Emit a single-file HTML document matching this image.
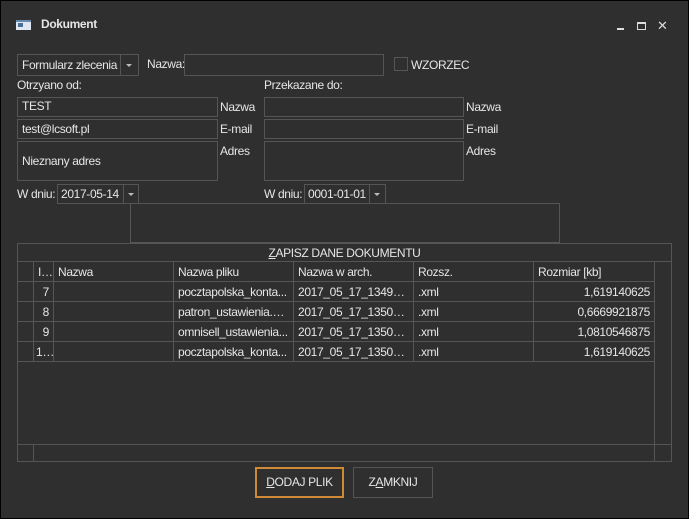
<!DOCTYPE html>
<html><head><meta charset="utf-8"><style>
*{box-sizing:border-box;margin:0;padding:0}
body{width:689px;height:519px;background:#000;font-family:"Liberation Sans",sans-serif;font-size:12px;letter-spacing:-0.35px;color:#e6e6e6;overflow:hidden}
#w{position:absolute;left:1px;top:1px;width:687px;height:517px;background:#2f2f2f}
.a{position:absolute}
.b{position:absolute;border:1px solid #555}
.t{position:absolute;white-space:nowrap;line-height:14px}
.arr{position:absolute;width:0;height:0;border-left:3px solid transparent;border-right:3px solid transparent;border-top:3px solid #bbb}
.c{position:absolute;height:20px;line-height:20px;border-right:1px solid #555;border-bottom:1px solid #555;padding:0 4px;white-space:nowrap;overflow:hidden;text-overflow:ellipsis}
.r{text-align:right}
</style></head><body><div id="w"></div>
<div class="a" style="left:16px;top:20px;width:15px;height:10px;background:#dfe8f0;border-top:2px solid #6a8bb0"></div>
<div class="a" style="left:18px;top:23px;width:5px;height:4px;background:#4a6e96"></div>
<div class="t" style="left:41px;top:17px;font-weight:bold;font-size:12px">Dokument</div>
<div class="a" style="left:617px;top:28px;width:7px;height:2px;background:#ddd"></div>
<div class="a" style="left:637px;top:22px;width:9px;height:8px;border:1px solid #ddd;border-top-width:2px"></div>
<div class="t" style="left:657px;top:19px;font-size:13px;color:#ddd">✕</div>
<div class="b" style="left:17px;top:54px;width:122px;height:22px"></div>
<div class="a" style="left:120px;top:55px;width:1px;height:20px;background:#555"></div>
<div class="arr" style="left:126px;top:64px"></div>
<div class="t" style="left:22px;top:58px">Formularz zlecenia</div>
<div class="t" style="left:147px;top:57px">Nazwa:</div>
<div class="b" style="left:184px;top:54px;width:200px;height:22px"></div>
<div class="b" style="left:394px;top:57px;width:14px;height:14px"></div>
<div class="t" style="left:411px;top:58px">WZORZEC</div>
<div class="t" style="left:17px;top:78px">Otrzyano od:</div>
<div class="t" style="left:264px;top:78px">Przekazane do:</div>
<div class="b" style="left:17px;top:97px;width:201px;height:20px"></div>
<div class="t" style="left:22px;top:99px">TEST</div>
<div class="b" style="left:17px;top:119px;width:201px;height:20px"></div>
<div class="t" style="left:22px;top:122px">test@lcsoft.pl</div>
<div class="b" style="left:17px;top:141px;width:201px;height:40px"></div>
<div class="t" style="left:22px;top:154px">Nieznany adres</div>
<div class="t" style="left:220px;top:100px">Nazwa</div>
<div class="t" style="left:220px;top:122px">E-mail</div>
<div class="t" style="left:220px;top:144px">Adres</div>
<div class="b" style="left:264px;top:97px;width:200px;height:20px"></div>
<div class="b" style="left:264px;top:119px;width:200px;height:20px"></div>
<div class="b" style="left:264px;top:141px;width:200px;height:40px"></div>
<div class="t" style="left:466px;top:100px">Nazwa</div>
<div class="t" style="left:466px;top:122px">E-mail</div>
<div class="t" style="left:466px;top:144px">Adres</div>
<div class="t" style="left:17px;top:187px">W dniu:</div>
<div class="b" style="left:57px;top:184px;width:82px;height:20px"></div>
<div class="a" style="left:123px;top:185px;width:1px;height:18px;background:#555"></div>
<div class="arr" style="left:128px;top:193px"></div>
<div class="t" style="left:61px;top:187px">2017-05-14</div>
<div class="t" style="left:264px;top:187px">W dniu:</div>
<div class="b" style="left:304px;top:184px;width:82px;height:20px"></div>
<div class="a" style="left:369px;top:185px;width:1px;height:18px;background:#555"></div>
<div class="arr" style="left:374px;top:193px"></div>
<div class="t" style="left:308px;top:187px">0001-01-01</div>
<div class="b" style="left:130px;top:203px;width:430px;height:40px"></div>
<div class="b" style="left:17px;top:243px;width:655px;height:219px"></div>
<div class="a" style="left:18px;top:261px;width:653px;height:1px;background:#555"></div>
<div class="t" style="left:17px;top:246px;width:655px;text-align:center"><u>Z</u>APISZ DANE DOKUMENTU</div>
<div class="a" style="left:18px;top:262px">
<div style="position:relative">
<div class="c" style="left:0;top:0;width:16px"></div>
<div class="c" style="left:16px;top:0;width:20px">ID</div>
<div class="c" style="left:36px;top:0;width:120px">Nazwa</div>
<div class="c" style="left:156px;top:0;width:120px">Nazwa pliku</div>
<div class="c" style="left:276px;top:0;width:120px">Nazwa w arch.</div>
<div class="c" style="left:396px;top:0;width:120px">Rozsz.</div>
<div class="c" style="left:516px;top:0;width:121px">Rozmiar [kb]</div>
<div class="c" style="left:0;top:20px;width:16px"></div><div class="c r" style="left:16px;top:20px;width:20px">7</div><div class="c" style="left:36px;top:20px;width:120px"></div><div class="c" style="left:156px;top:20px;width:120px">pocztapolska_konta...</div><div class="c" style="left:276px;top:20px;width:120px">2017_05_17_134958...</div><div class="c" style="left:396px;top:20px;width:120px">.xml</div><div class="c r" style="left:516px;top:20px;width:121px">1,619140625</div>
<div class="c" style="left:0;top:40px;width:16px"></div><div class="c r" style="left:16px;top:40px;width:20px">8</div><div class="c" style="left:36px;top:40px;width:120px"></div><div class="c" style="left:156px;top:40px;width:120px">patron_ustawienia.xml</div><div class="c" style="left:276px;top:40px;width:120px">2017_05_17_135000...</div><div class="c" style="left:396px;top:40px;width:120px">.xml</div><div class="c r" style="left:516px;top:40px;width:121px">0,6669921875</div>
<div class="c" style="left:0;top:60px;width:16px"></div><div class="c r" style="left:16px;top:60px;width:20px">9</div><div class="c" style="left:36px;top:60px;width:120px"></div><div class="c" style="left:156px;top:60px;width:120px">omnisell_ustawienia...</div><div class="c" style="left:276px;top:60px;width:120px">2017_05_17_135002...</div><div class="c" style="left:396px;top:60px;width:120px">.xml</div><div class="c r" style="left:516px;top:60px;width:121px">1,0810546875</div>
<div class="c" style="left:0;top:80px;width:16px"></div><div class="c" style="left:16px;top:80px;width:20px;padding:0 2px">1...</div><div class="c" style="left:36px;top:80px;width:120px"></div><div class="c" style="left:156px;top:80px;width:120px">pocztapolska_konta...</div><div class="c" style="left:276px;top:80px;width:120px">2017_05_17_135004...</div><div class="c" style="left:396px;top:80px;width:120px">.xml</div><div class="c r" style="left:516px;top:80px;width:121px">1,619140625</div>
</div></div>
<div class="a" style="left:654px;top:262px;width:1px;height:182px;background:#555"></div>
<div class="a" style="left:18px;top:444px;width:653px;height:1px;background:#555"></div>
<div class="a" style="left:33px;top:445px;width:1px;height:16px;background:#555"></div>
<div class="a" style="left:654px;top:445px;width:1px;height:16px;background:#555"></div>
<div class="a" style="left:255px;top:467px;width:89px;height:31px;border:2px solid #d08a35;text-align:center;line-height:27px"><u>D</u>ODAJ PLIK</div>
<div class="b" style="left:353px;top:467px;width:80px;height:31px;text-align:center;line-height:29px">Z<u>A</u>MKNIJ</div>
</body></html>
